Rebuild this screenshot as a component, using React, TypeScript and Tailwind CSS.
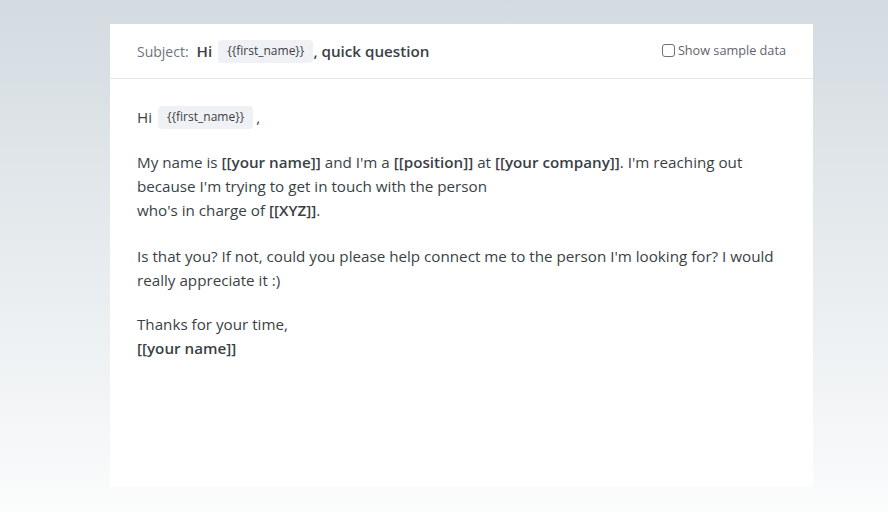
export default function App() {
  const chip = (
    <span className="inline-flex h-[23px] items-center rounded-[4px] bg-[#eff1f4] px-[9px] align-middle text-[12px] font-normal leading-none text-[#3a3f46]">
      {'{{first_name}}'}
    </span>
  )

  return (
    <div
      className="h-[512px] w-[888px] bg-gradient-to-b from-[#d3dbe0] to-[#fbfcfc] pl-[110px] pt-[24px] text-[#3a3f46]"
      style={{ fontFamily: '"Open Sans", "Liberation Sans", sans-serif' }}
    >
      <div className="h-[463px] w-[703px] bg-white">
        {/* subject bar */}
        <div className="flex h-[55px] items-center justify-between border-b border-[#e4e7ea] pl-[27px] pr-[27px]">
          <div className="flex items-center text-[15.2px]">
            <span className="mr-[8px] text-[14px] text-[#6d737b]">Subject:</span>
            <span className="mr-[6px] font-semibold">Hi</span>
            {chip}
            <span className="font-semibold">, quick question</span>
          </div>
          <label className="flex items-center gap-[3px] text-[12.7px] text-[#5f656d]">
            <span className="h-[13px] w-[13px] rounded-[3px] border border-[#6b7178]" />
            Show sample data
          </label>
        </div>

        {/* body */}
        <div className="px-[27px] pt-[26px] text-[15.2px] leading-[24px]">
          <p className="flex items-center">
            <span className="mr-[6px]">Hi</span>
            {chip}
            <span className="ml-[3px]">,</span>
          </p>
          <p className="mt-[21px]">
            My name is <b className="font-semibold">[[your name]]</b> and I'm a{' '}
            <b className="font-semibold">[[position]]</b> at{' '}
            <b className="font-semibold">[[your company]]</b>. I'm reaching out
            <br />
            because I'm trying to get in touch with the person
            <br />
            who's in charge of <b className="font-semibold">[[XYZ]]</b>.
          </p>
          <p className="mt-[22px]">
            Is that you? If not, could you please help connect me to the person I'm looking for? I would
            really appreciate it :)
          </p>
          <p className="mt-[20px]">
            Thanks for your time,
            <br />
            <b className="font-semibold">[[your name]]</b>
          </p>
        </div>
      </div>
    </div>
  )
}
